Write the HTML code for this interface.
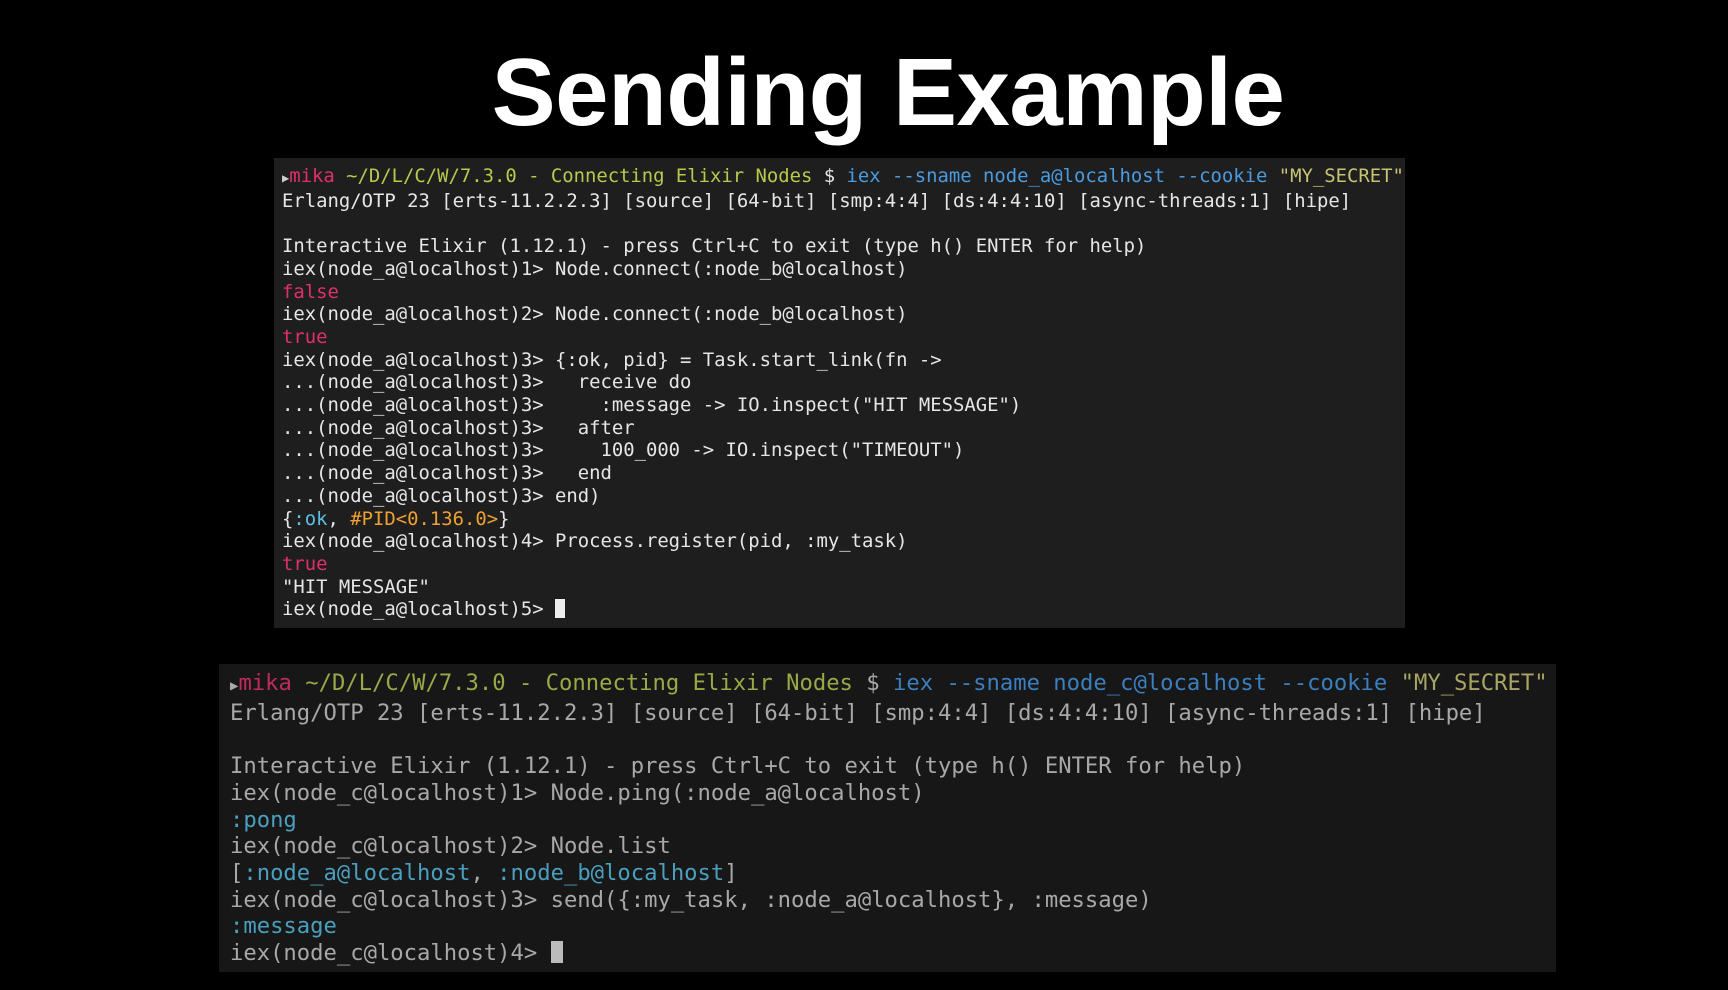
<!DOCTYPE html>
<html><head><meta charset="utf-8"><style>
body{margin:0;width:1728px;height:990px;background:#000;overflow:hidden;position:relative;font-family:"DejaVu Sans Mono","Liberation Mono",monospace}
h1{position:absolute;left:0;width:1776px;top:38px;margin:0;text-align:center;color:#fff;font:bold 96px "Liberation Sans",sans-serif;letter-spacing:-0.5px}
.t{position:absolute;white-space:pre}
#a{position:absolute;left:274px;top:158px;width:1131px;height:470px;background:#1e1e1e}
#a .t{left:8px;top:7px;font-size:18.9px;line-height:22.7px;color:#e6e6e6}
#b{position:absolute;left:219px;top:664px;width:1337px;height:308px;background:#171717}
#b .t{left:11px;top:6px;font-size:22.2px;line-height:26.7px;color:#a8a8a8}
.r{color:#e0306a}.g{color:#b9c94c}.bl{color:#4a9be0}.y{color:#c9c474}.c{color:#5cc0e6}.o{color:#f0a030}
#b .g{color:#9aa846}#b .bl{color:#3a7fbf}#b .y{color:#a9a562}#b .c{color:#4a9fbf}#b .r{color:#c02a5c}
.cur{display:inline-block;width:0.55em;height:1em;background:#eee;vertical-align:-3px}
</style></head><body>
<h1>Sending Example</h1>
<div id="a"><div class="t"><span style="color:#ccc;font-size:12px">▶</span><span class="r">mika</span> <span class="g">~/D/L/C/W/7.3.0 - Connecting Elixir Nodes</span> $ <span class="bl">iex</span> <span class="bl">--sname node_a@localhost --cookie</span> <span class="y">"MY_SECRET"</span>
Erlang/OTP 23 [erts-11.2.2.3] [source] [64-bit] [smp:4:4] [ds:4:4:10] [async-threads:1] [hipe]

Interactive Elixir (1.12.1) - press Ctrl+C to exit (type h() ENTER for help)
iex(node_a@localhost)1&gt; Node.connect(:node_b@localhost)
<span class="r">false</span>
iex(node_a@localhost)2&gt; Node.connect(:node_b@localhost)
<span class="r">true</span>
iex(node_a@localhost)3&gt; {:ok, pid} = Task.start_link(fn -&gt;
...(node_a@localhost)3&gt;   receive do
...(node_a@localhost)3&gt;     :message -&gt; IO.inspect("HIT MESSAGE")
...(node_a@localhost)3&gt;   after
...(node_a@localhost)3&gt;     100_000 -&gt; IO.inspect("TIMEOUT")
...(node_a@localhost)3&gt;   end
...(node_a@localhost)3&gt; end)
{<span class="c">:ok</span>, <span class="o">#PID&lt;0.136.0&gt;</span>}
iex(node_a@localhost)4&gt; Process.register(pid, :my_task)
<span class="r">true</span>
"HIT MESSAGE"
iex(node_a@localhost)5&gt; <span class="cur"></span></div></div>
<div id="b"><div class="t"><span style="color:#aaa;font-size:14px">▶</span><span class="r">mika</span> <span class="g">~/D/L/C/W/7.3.0 - Connecting Elixir Nodes</span> $ <span class="bl">iex</span> <span class="bl">--sname node_c@localhost --cookie</span> <span class="y">"MY_SECRET"</span>
Erlang/OTP 23 [erts-11.2.2.3] [source] [64-bit] [smp:4:4] [ds:4:4:10] [async-threads:1] [hipe]

Interactive Elixir (1.12.1) - press Ctrl+C to exit (type h() ENTER for help)
iex(node_c@localhost)1&gt; Node.ping(:node_a@localhost)
<span class="c">:pong</span>
iex(node_c@localhost)2&gt; Node.list
[<span class="c">:node_a@localhost</span>, <span class="c">:node_b@localhost</span>]
iex(node_c@localhost)3&gt; send({:my_task, :node_a@localhost}, :message)
<span class="c">:message</span>
iex(node_c@localhost)4&gt; <span class="cur" style="background:#bbb"></span></div></div>
</body></html>
